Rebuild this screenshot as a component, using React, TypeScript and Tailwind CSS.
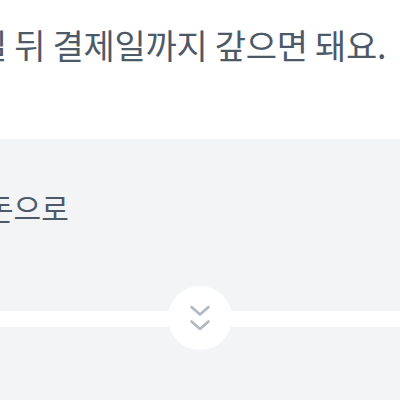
const FONT = "font-['Noto_Sans_CJK_KR','Noto_Sans',sans-serif]";

function DoubleChevron() {
  return (
    <svg width="24" height="28" viewBox="0 0 24 28" fill="none">
      <path d="M3.5 3l8.5 7.5 8.5-7.5" stroke="#b0b8c1" strokeWidth="2.6" strokeLinecap="round" strokeLinejoin="round" />
      <path d="M3.5 17.5l8.5 7.5 8.5-7.5" stroke="#b0b8c1" strokeWidth="2.6" strokeLinecap="round" strokeLinejoin="round" />
    </svg>
  );
}

export default function App() {
  return (
    <div className={`relative w-[400px] h-[400px] overflow-hidden bg-white ${FONT}`}>
      <section className="h-[139px] pt-[21px]">
        <p className="ml-[-24px] whitespace-nowrap text-[34px] leading-[48px] tracking-[-0.3px] text-[#4e5968]">
          일 뒤 결제일까지 갚으면 돼요.
        </p>
      </section>

      <section className="h-[172px] bg-[#f2f4f6] pt-[48px]">
        <p className="ml-[-14px] whitespace-nowrap text-[30px] leading-[40px] text-[#4e5968]">
          돈으로
        </p>
      </section>

      <div className="h-[16px] bg-white" />
      <div className="h-[73px] bg-[#f2f4f6]" />

      <div className="absolute left-[168px] top-[286px] flex h-[64px] w-[64px] items-center justify-center rounded-full bg-white">
        <DoubleChevron />
      </div>
    </div>
  );
}
